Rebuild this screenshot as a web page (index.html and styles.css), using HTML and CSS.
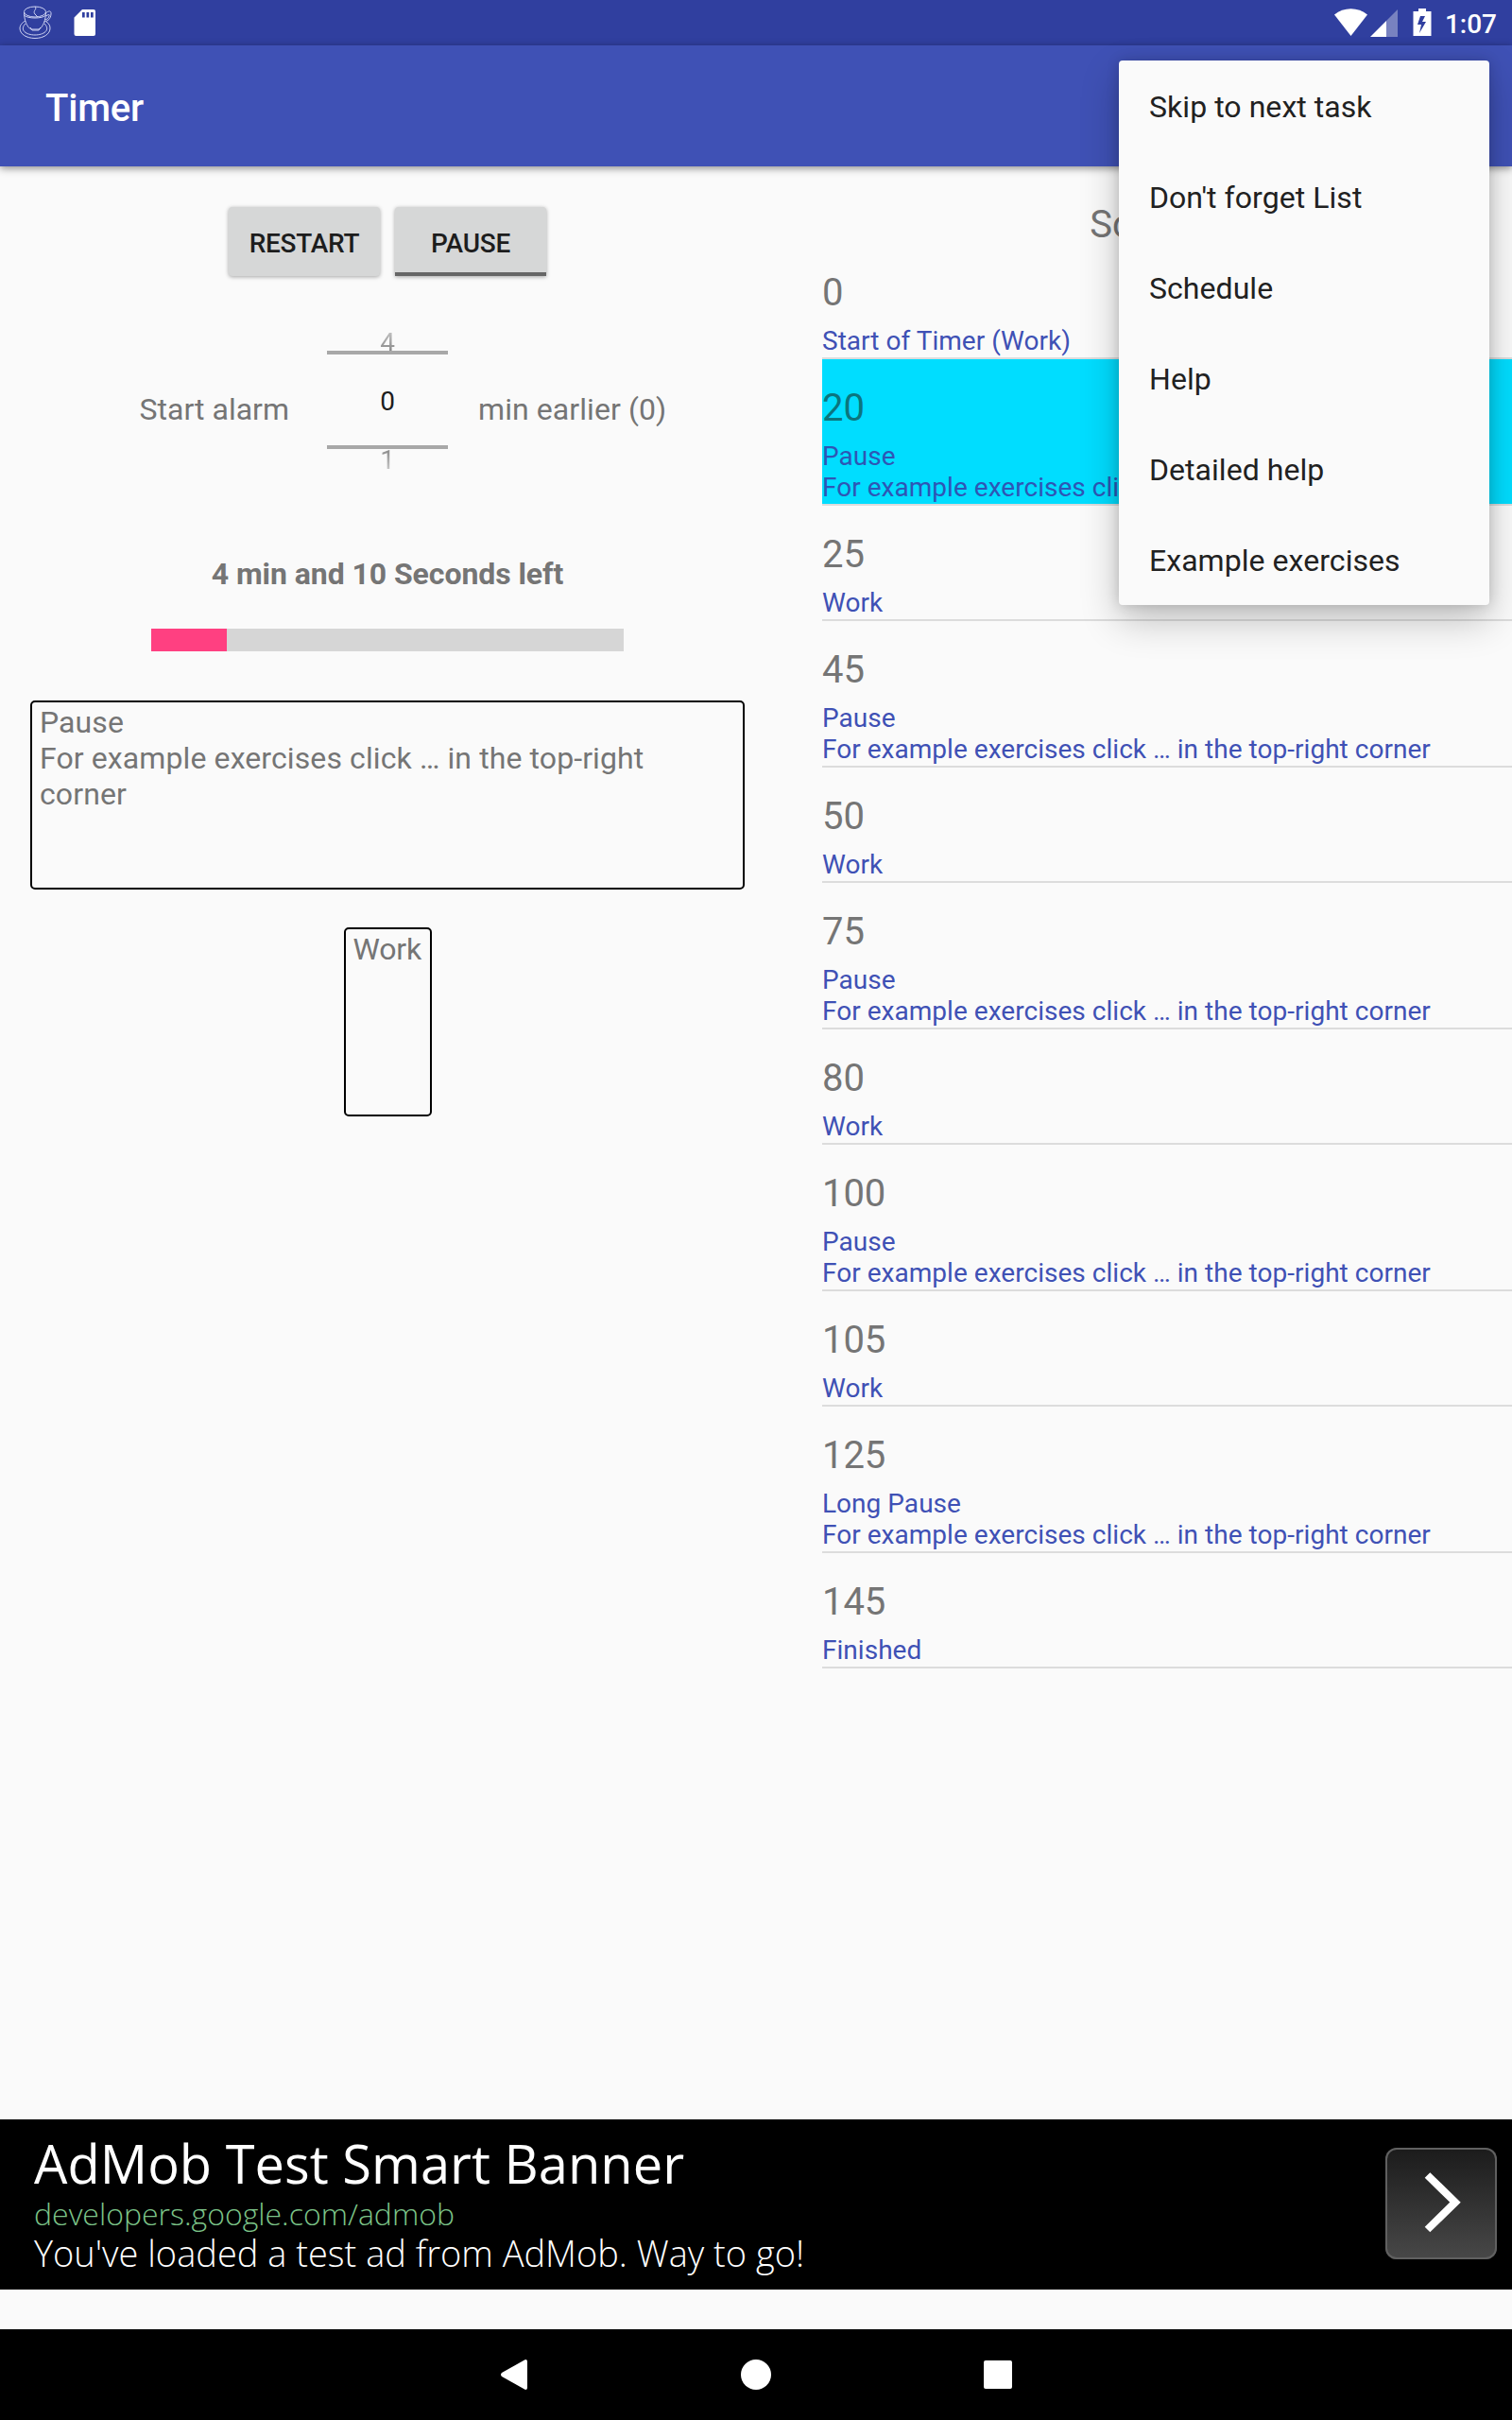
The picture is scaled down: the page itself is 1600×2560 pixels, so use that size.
FILE: index.html
```html
<!DOCTYPE html>
<html lang="en">
<head>
<meta charset="utf-8">
<title>Timer</title>
<link rel="stylesheet" href="styles.css">
</head>
<body>
<div class="screen">
  <header class="statusbar">
    <svg class="cup" width="36" height="36" viewBox="0 0 36 36" fill="none" stroke="#cdd2f2" stroke-width="1">
      <ellipse cx="17" cy="6.500" rx="11.500" ry="5.500"/>
      <path d="M5.500 7c0 8 3 16 7.500 18h8c4.500-2 7.500-10 7.500-18M5.500 10c3 4 20 4 23 0M17 1c3 3-3 4 0 8l3 3M28.500 8c3-3 6-3 5.500 1-.5 5-3 7-7 8M29 11c2-2 4-2 3 0-1 3-2 3-4 4M12 23l2 3h7l2-3"/>
      <path d="M7 16c-4 2-6 5-6 8 0 6 7 10.500 16 10.500S33 30 33 24c0-3-1-5-4-7M7 19c-7 7 1 12 10 12s17-5 10-12"/>
    </svg>
    <svg class="sd" width="24" height="28" viewBox="0 0 24 28"><path fill="#fff" fill-rule="evenodd" d="M9 0h12q2 0 2 2v24q0 2-2 2H2.500q-2 0-2-2V8.500zM9 3v5.500h2.700V3zM13.500 3v5.500h2.700V3zM18 3v5.500h2.700V3z"/></svg>
    <span class="spacer"></span>
    <svg class="signals" width="104" height="30" viewBox="0 0 104 30">
      <path fill="#fff" d="M0 6.500C10-2 25-2 35 6.500L17.500 29z"/>
      <path fill="#fff" fill-opacity=".35" d="M55 13 67 1v29H55z"/>
      <path fill="#fff" d="M38 30 55 13v17z"/>
      <path fill="#fff" fill-rule="evenodd" d="M89 0h8v3h5.500v26h-19V3H89zM91 8l-3 9h4l-2 9 7-12h-4l3-6z"/>
    </svg>
    <span class="clock">1:07</span>
  </header>
  <div class="appbar"><h1>Timer</h1></div>

  <main class="content">
    <section class="timer">
      <div class="buttons">
        <button class="btn">RESTART</button>
        <button class="btn btn-toggle">PAUSE</button>
      </div>
      <div class="alarm">
        <span class="alarm-before">Start alarm</span>
        <div class="picker">
          <span class="prev">4</span>
          <span class="value">0</span>
          <span class="next">1</span>
        </div>
        <span class="alarm-after">min earlier (0)</span>
      </div>
      <p class="remaining">4 min and 10 Seconds left</p>
      <div class="progress"><div class="progress-fill" style="width:16%"></div></div>
      <div class="task current">Pause<br>For example exercises click … in the top-right corner</div>
      <div class="task upcoming">Work</div>
    </section>

    <section class="schedule">
      <h2>Schedule</h2>
      <ul>
        <li><b>0</b><p>Start of Timer (Work)</p></li>
        <li class="active"><b>20</b><p>Pause<br>For example exercises click … in the top-right corner</p></li>
        <li><b>25</b><p>Work</p></li>
        <li><b>45</b><p>Pause<br>For example exercises click … in the top-right corner</p></li>
        <li><b>50</b><p>Work</p></li>
        <li><b>75</b><p>Pause<br>For example exercises click … in the top-right corner</p></li>
        <li><b>80</b><p>Work</p></li>
        <li><b>100</b><p>Pause<br>For example exercises click … in the top-right corner</p></li>
        <li><b>105</b><p>Work</p></li>
        <li><b>125</b><p>Long Pause<br>For example exercises click … in the top-right corner</p></li>
        <li><b>145</b><p>Finished</p></li>
      </ul>
    </section>
  </main>

  <aside class="ad">
    <div class="ad-text">
      <div class="ad-title">AdMob Test Smart Banner</div>
      <div class="ad-url">developers.google.com/admob</div>
      <div class="ad-body">You've loaded a test ad from AdMob. Way to go!</div>
    </div>
    <div class="ad-go">
      <svg width="118" height="118" viewBox="0 0 118 118" fill="none" stroke="#fff" stroke-width="8"><path d="M44.500 29 74 57.700 44.500 86.500"/></svg>
    </div>
  </aside>

  <nav class="navbar">
    <svg width="32" height="32" viewBox="0 0 32 32"><path fill="#fff" d="M28 0q2 0 2 2v28q0 2-2 2L3 18q-2-2 0-4z"/></svg>
    <svg width="32" height="32" viewBox="0 0 32 32"><circle cx="16" cy="16" r="16" fill="#fff"/></svg>
    <svg width="32" height="32" viewBox="0 0 32 32"><rect x="1" y="1" width="30" height="30" rx="2" fill="#fff"/></svg>
  </nav>

  <ul class="menu">
    <li>Skip to next task</li>
    <li>Don't forget List</li>
    <li>Schedule</li>
    <li>Help</li>
    <li>Detailed help</li>
    <li>Example exercises</li>
  </ul>
</div>
</body>
</html>
```
FILE: styles.css
```css
* { box-sizing: border-box; margin: 0; padding: 0; }
body { background: #fafafa; font-family: Roboto, sans-serif; color: #757575; }
ul { list-style: none; }
svg { display: block; flex: none; }

.screen {
  position: relative;
  width: 1600px;
  height: 2560px;
  display: flex;
  flex-direction: column;
  overflow: hidden;
}

.statusbar {
  height: 48px;
  flex: none;
  display: flex;
  align-items: center;
  padding: 0 16px 0 20px;
  background: #303f9f;
  color: #fff;
}
.sd { margin-left: 22px; }
.spacer { flex: 1; }
.signals { margin-right: 13px; }
.clock { font-size: 28px; font-weight: 500; line-height: 48px; padding-top: 3px; }

.appbar {
  height: 128px;
  flex: none;
  display: flex;
  align-items: center;
  padding: 5px 48px 0;
  background: #3f51b5;
  box-shadow: 0 2px 8px rgba(0, 0, 0, .45);
}
.appbar h1 { font-size: 40px; font-weight: 500; line-height: 48px; letter-spacing: -.2px; color: #fff; }

.content { flex: 1; display: grid; grid-template-columns: 820px 1fr; }

.timer { display: flex; flex-direction: column; align-items: center; padding: 43px 32px 0; }
.buttons { display: flex; gap: 16px; }
.btn {
  width: 160px;
  height: 73px;
  padding-top: 4px;
  border: 0;
  border-radius: 4px;
  background: #d6d7d7;
  color: #1d1d1d;
  font: 500 28px/69px Roboto, sans-serif;
  letter-spacing: -.25px;
  box-shadow: 0 1px 4px rgba(0, 0, 0, .35);
}
.btn-toggle {
  border-radius: 4px 4px 0 0;
  background: linear-gradient(#666, #666) bottom / 100% 4px no-repeat #d6d7d7;
}

.alarm {
  width: 756px;
  height: 160px;
  margin-top: 51px;
  display: grid;
  grid-template-columns: 1fr 128px 1fr;
  font-size: 32px;
  line-height: 38px;
}
.alarm-before, .alarm-after { margin-top: 71px; white-space: nowrap; }
.alarm-before { padding-right: 40px; text-align: right; }
.alarm-after { padding-left: 32px; letter-spacing: .08px; }
.picker {
  display: grid;
  grid-template-rows: 28px 104px 28px;
  text-align: center;
  font-size: 28px;
}
.prev, .next { color: transparent; background-clip: text; -webkit-background-clip: text; }
.prev { line-height: 39px; background-image: linear-gradient(#c4c4c4 25%, #8a8a8a); }
.next { line-height: 23px; background-image: linear-gradient(#8a8a8a, #c4c4c4 75%); }
.value { border: solid #a8a8a8; border-width: 4px 0; color: #1d1d1d; line-height: 100px; }

.remaining { margin-top: 85px; font-size: 32px; font-weight: 700; line-height: 38px; letter-spacing: -.07px; }
.progress { width: 500px; height: 24px; margin-top: 39px; background: #d6d6d6; }
.progress-fill { height: 24px; background: #ff4081; }

.task {
  height: 200px;
  border: 2px solid #000;
  border-radius: 5px;
  padding: 2px 8px;
  font-size: 32px;
  line-height: 38px;
}
.current { width: 756px; margin-top: 52px; padding-right: 24px; letter-spacing: .1px; }
.upcoming { width: 93px; margin-top: 40px; letter-spacing: -.2px; }

.schedule { padding: 37px 0 0 50px; }
.schedule h2 { height: 45px; font-size: 40px; font-weight: 400; line-height: 50px; text-align: center; }
.schedule li { padding-top: 28px; border-bottom: 2px solid #dcdcdc; }
.schedule b { display: block; font-size: 40px; font-weight: 400; line-height: 47px; letter-spacing: -.1px; }
.schedule p { margin-top: 11px; padding-bottom: 1px; font-size: 28px; line-height: 33px; letter-spacing: .03px; color: #3f51b5; }
.schedule .active { background: #00ddff; background-clip: padding-box; }
.active b { color: #0b757e; }
.schedule .active p { color: #2e56b5; }

.ad {
  height: 180px;
  flex: none;
  display: flex;
  justify-content: space-between;
  padding: 0 16px 0 36px;
  margin-bottom: 42px;
  background: #000;
  font-family: "Open Sans", sans-serif;
  white-space: nowrap;
}
.ad-title { height: 77px; font-size: 56px; line-height: 93px; letter-spacing: .03px; color: #fff; }
.ad-url { height: 44px; font-size: 32px; font-weight: 300; line-height: 46px; color: #7cc488; }
.ad-body { font-size: 38px; font-weight: 300; line-height: 40px; color: #fff; }
.ad-go {
  width: 118px;
  height: 118px;
  margin-top: 30px;
  border-radius: 12px;
  background: linear-gradient(#1b1b1b, #484848);
  box-shadow: inset 0 0 0 2px #606060;
}

.navbar {
  height: 96px;
  flex: none;
  display: flex;
  align-items: center;
  justify-content: center;
  gap: 224px;
  background: #000;
}

.menu {
  position: absolute;
  top: 64px;
  right: 24px;
  width: 392px;
  border-radius: 4px;
  background: #fafafa;
  color: #212121;
  font-size: 32px;
  line-height: 96px;
  letter-spacing: .05px;
  box-shadow: 0 16px 40px rgba(0, 0, 0, .24), 0 0 14px rgba(0, 0, 0, .16);
}
.menu li { height: 96px; padding: 1px 32px 0; }
```
